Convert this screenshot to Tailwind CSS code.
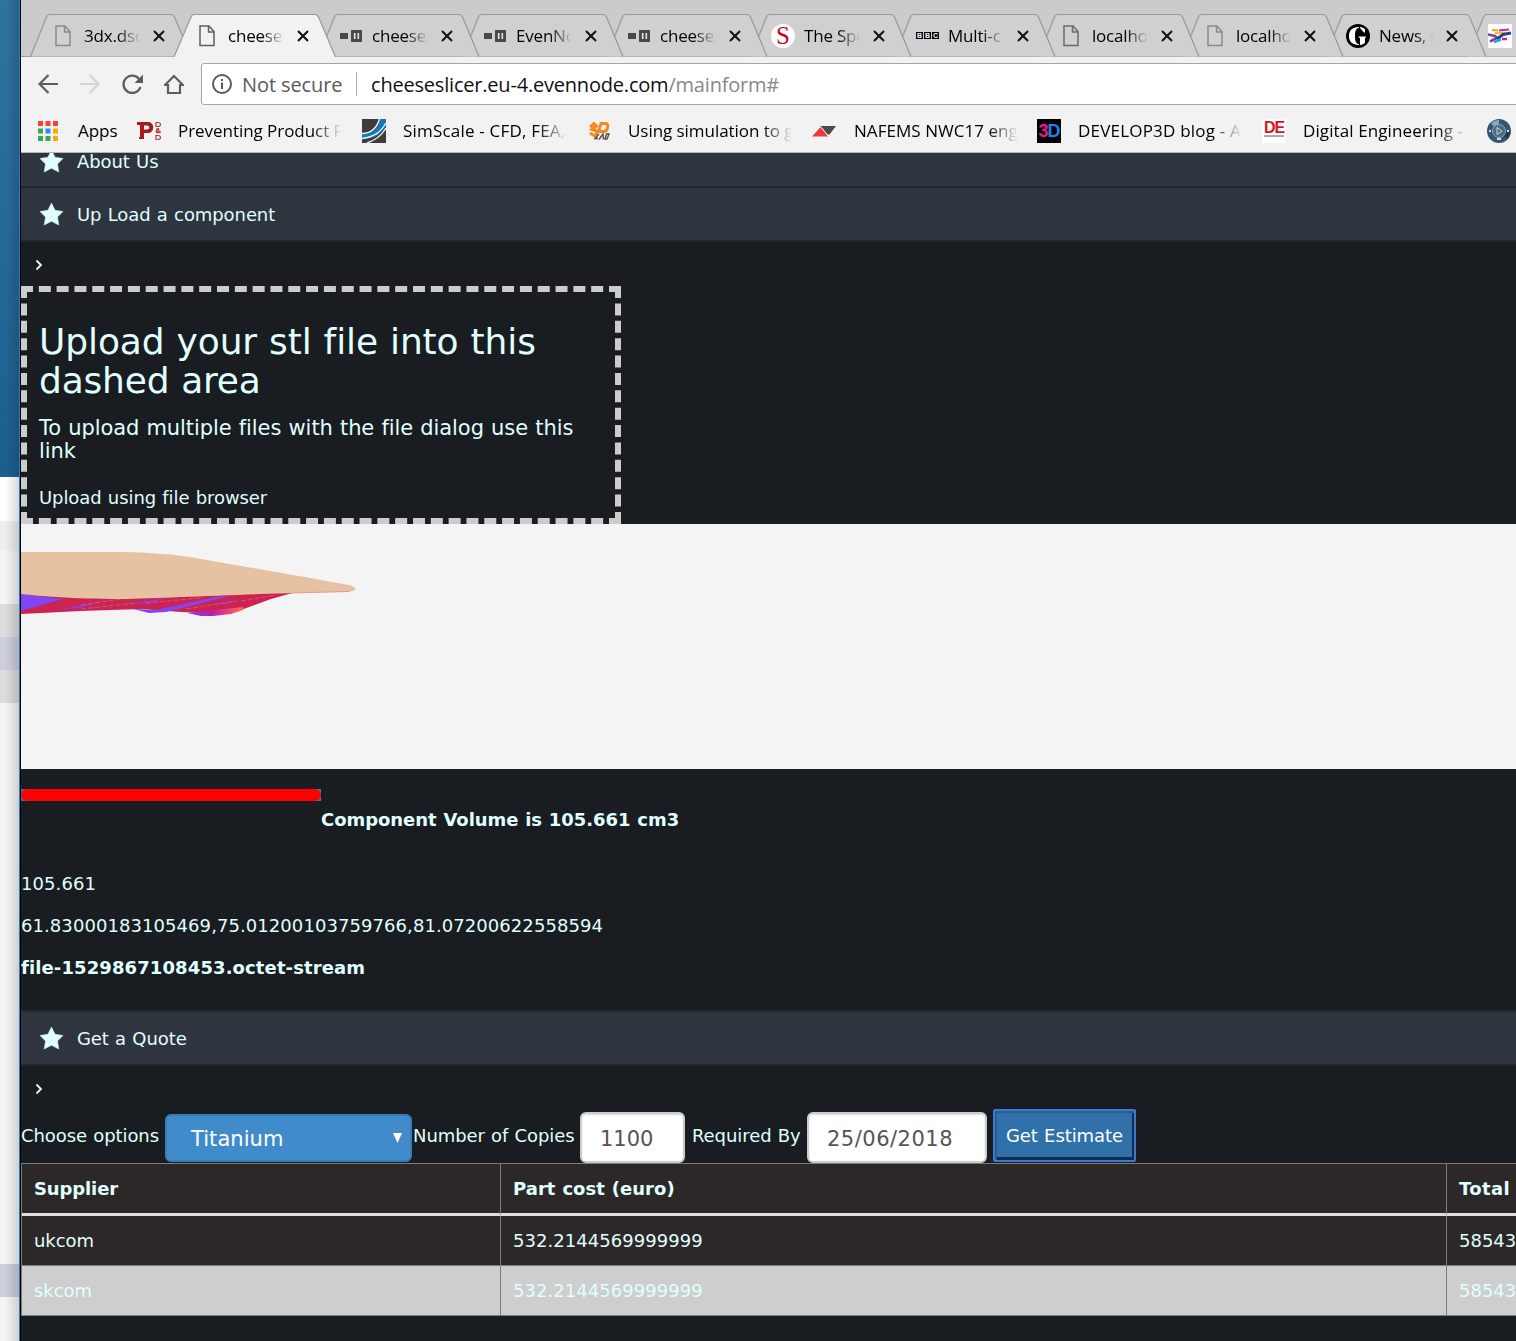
<!DOCTYPE html>
<html lang="en">
<head>
<meta charset="utf-8">
<title>cheeseslicer</title>
<script src="https://cdn.jsdelivr.net/npm/@tailwindcss/browser@4"></script>
</head>
<body class="flex h-[1341px] w-[1516px] overflow-hidden bg-[#191c20]">

<svg class="hidden">
  <symbol id="tab" viewBox="0 0 162 43"><path d="M0.5 42.5 L16.5 3 Q18 .5 20 .5 H141 Q143 .5 144.5 3 L161 42.5" fill="#d0d0d0" stroke="#999" stroke-width="1.2"/></symbol>
  <symbol id="tab-on" viewBox="0 0 162 43"><path d="M0 43 L17 3 Q18 .5 20 .5 H141 Q143 .5 144.5 3 L161.500 43" fill="#f2f2f2" stroke="#999" stroke-width="1.2"/></symbol>
  <symbol id="close" viewBox="0 0 12 12"><path d="M1 1 L11 11 M11 1 L1 11" stroke="#111" stroke-width="2.1" fill="none"/></symbol>
  <symbol id="page" viewBox="0 0 16 22"><path d="M1 1 H10 L15 6.500 V20.500 H1 Z M9.500 1 V7 H15" fill="none" stroke="currentColor" stroke-width="1.500"/></symbol>
  <symbol id="node" viewBox="0 0 22 12"><path d="M0 3 H8 V9 H0 Z M11 0 H22 V12 H11 Z" fill="#484848"/><path d="M14.700 3 V9 M18.300 3 V9" stroke="#e4e4e4" stroke-width="1.600"/></symbol>
  <symbol id="star" viewBox="0 0 24 23"><path d="M11.500 0 L15.100 7.200 L23 8.500 L17.500 14 L18.800 22 L11.500 18.300 L4.200 22 L5.500 14 L0 8.500 L7.900 7.200 Z" fill="#e0ffff" stroke="#e0ffff" stroke-width=".5"/></symbol>
</svg>

<!-- Window behind, visible at the left edge -->
<div class="relative flex w-[21px] shrink-0 flex-col border-r border-black">
  <div class="h-[477px] bg-gradient-to-b from-[#30739f] to-[#1b5f8f]"></div>
  <div class="h-[44px] bg-white"></div>
  <div class="h-[30px] bg-[#eeeeee]"></div>
  <div class="h-[53px] bg-[#f4f4f4]"></div>
  <div class="h-[33px] bg-[#dcdcdc]"></div>
  <div class="h-[33px] bg-[#cdcedc]"></div>
  <div class="h-[33px] bg-[#dcdcdc]"></div>
  <div class="h-[561px] bg-[#f4f4f4]"></div>
  <div class="h-[33px] bg-[#cdcedc]"></div>
  <div class="grow bg-[#f4f4f4]"></div>
  <div class="absolute inset-0 border-r border-[#2b7cc0] bg-gradient-to-r from-transparent from-30% to-black/15"></div>
</div>

<div class="flex w-[1495px] shrink-0 flex-col overflow-hidden">

  <!-- Tabs -->
  <div class="relative flex h-[57px] shrink-0 border-b border-[#999] bg-[#cbcbcb] pl-[9px] pt-[14px] font-['Open_Sans',sans-serif] text-[17px] tracking-[-0.2px] text-black">
    <div class="relative z-[19] -mr-[18px] flex h-[43px] w-[162px] shrink-0 items-center pl-[25px]">
      <svg class="absolute inset-0 h-[43px] w-[162px]"><use href="#tab"/></svg>
      <svg class="relative h-[22px] w-[16px] text-[#8a8a8a]"><use href="#page"/></svg>
      <span class="relative ml-[13px] w-[56px] overflow-hidden whitespace-nowrap [mask-image:linear-gradient(to_right,#000_60%,transparent)]">3dx.dsc</span>
      <svg class="relative ml-[13px] h-[12px] w-[12px]"><use href="#close"/></svg>
    </div>
    <div class="relative z-[30] -mr-[18px] flex h-[43px] w-[162px] shrink-0 items-center pl-[25px]">
      <svg class="absolute inset-0 h-[43px] w-[162px]"><use href="#tab-on"/></svg>
      <svg class="relative h-[22px] w-[16px] text-[#5f5f5f]"><use href="#page"/></svg>
      <span class="relative ml-[13px] w-[56px] overflow-hidden whitespace-nowrap [mask-image:linear-gradient(to_right,#000_60%,transparent)]">cheeses</span>
      <svg class="relative ml-[13px] h-[12px] w-[12px]"><use href="#close"/></svg>
    </div>
    <div class="relative z-[18] -mr-[18px] flex h-[43px] w-[162px] shrink-0 items-center pl-[22px]">
      <svg class="absolute inset-0 h-[43px] w-[162px]"><use href="#tab"/></svg>
      <svg class="relative h-[12px] w-[22px]"><use href="#node"/></svg>
      <span class="relative ml-[10px] w-[56px] overflow-hidden whitespace-nowrap [mask-image:linear-gradient(to_right,#000_60%,transparent)]">cheeses</span>
      <svg class="relative ml-[13px] h-[12px] w-[12px]"><use href="#close"/></svg>
    </div>
    <div class="relative z-[17] -mr-[18px] flex h-[43px] w-[162px] shrink-0 items-center pl-[22px]">
      <svg class="absolute inset-0 h-[43px] w-[162px]"><use href="#tab"/></svg>
      <svg class="relative h-[12px] w-[22px]"><use href="#node"/></svg>
      <span class="relative ml-[10px] w-[56px] overflow-hidden whitespace-nowrap [mask-image:linear-gradient(to_right,#000_60%,transparent)]">EvenNo</span>
      <svg class="relative ml-[13px] h-[12px] w-[12px]"><use href="#close"/></svg>
    </div>
    <div class="relative z-[16] -mr-[18px] flex h-[43px] w-[162px] shrink-0 items-center pl-[22px]">
      <svg class="absolute inset-0 h-[43px] w-[162px]"><use href="#tab"/></svg>
      <svg class="relative h-[12px] w-[22px]"><use href="#node"/></svg>
      <span class="relative ml-[10px] w-[56px] overflow-hidden whitespace-nowrap [mask-image:linear-gradient(to_right,#000_60%,transparent)]">cheeses</span>
      <svg class="relative ml-[13px] h-[12px] w-[12px]"><use href="#close"/></svg>
    </div>
    <div class="relative z-[15] -mr-[18px] flex h-[43px] w-[162px] shrink-0 items-center pl-[21px]">
      <svg class="absolute inset-0 h-[43px] w-[162px]"><use href="#tab"/></svg>
      <span class="relative flex h-6 w-6 items-center justify-center rounded-full bg-white font-['Liberation_Serif',serif] text-[25px] leading-none tracking-normal text-[#d0021b]">S</span>
      <span class="relative ml-[9px] w-[56px] overflow-hidden whitespace-nowrap [mask-image:linear-gradient(to_right,#000_60%,transparent)]">The Spe</span>
      <svg class="relative ml-[13px] h-[12px] w-[12px]"><use href="#close"/></svg>
    </div>
    <div class="relative z-[14] -mr-[18px] flex h-[43px] w-[162px] shrink-0 items-center pl-[22px]">
      <svg class="absolute inset-0 h-[43px] w-[162px]"><use href="#tab"/></svg>
      <span class="relative flex gap-px font-['Liberation_Sans',sans-serif] text-[7px] font-bold leading-[7px] tracking-normal text-white"><b class="w-[7px] bg-black text-center">B</b><b class="w-[7px] bg-black text-center">B</b><b class="w-[7px] bg-black text-center">C</b></span>
      <span class="relative ml-[9px] w-[56px] overflow-hidden whitespace-nowrap [mask-image:linear-gradient(to_right,#000_60%,transparent)]">Multi-c</span>
      <svg class="relative ml-[13px] h-[12px] w-[12px]"><use href="#close"/></svg>
    </div>
    <div class="relative z-[13] -mr-[18px] flex h-[43px] w-[162px] shrink-0 items-center pl-[25px]">
      <svg class="absolute inset-0 h-[43px] w-[162px]"><use href="#tab"/></svg>
      <svg class="relative h-[22px] w-[16px] text-[#6a6a6a]"><use href="#page"/></svg>
      <span class="relative ml-[13px] w-[56px] overflow-hidden whitespace-nowrap [mask-image:linear-gradient(to_right,#000_60%,transparent)]">localho</span>
      <svg class="relative ml-[13px] h-[12px] w-[12px]"><use href="#close"/></svg>
    </div>
    <div class="relative z-[12] -mr-[19px] flex h-[43px] w-[162px] shrink-0 items-center pl-[25px]">
      <svg class="absolute inset-0 h-[43px] w-[162px]"><use href="#tab"/></svg>
      <svg class="relative h-[22px] w-[16px] text-[#8a8a8a]"><use href="#page"/></svg>
      <span class="relative ml-[13px] w-[55px] overflow-hidden whitespace-nowrap [mask-image:linear-gradient(to_right,#000_60%,transparent)]">localho</span>
      <svg class="relative ml-[13px] h-[12px] w-[12px]"><use href="#close"/></svg>
    </div>
    <div class="relative z-[11] -mr-[20px] flex h-[43px] w-[162px] shrink-0 items-center pl-[21px]">
      <svg class="absolute inset-0 h-[43px] w-[162px]"><use href="#tab"/></svg>
      <svg class="relative h-6 w-6" viewBox="0 0 24 24"><circle cx="12" cy="12" r="12" fill="#000"/><path d="M13 3 C6 3 3 6.500 3 12 S6 21 13 21 V20 C10 20 9 17 9 12 S10 4 13 4 Z" fill="#fff"/><path d="M14 3 C16 3.200 18 4 19 5.200 V8.500 H18 L14 4 Z M12.500 12.500 H20 V13.300 L19 14 V18.700 C18 19.800 16 20.600 14 20.900 V14 L12.500 13.300 Z" fill="#fff"/></svg>
      <span class="relative ml-[9px] w-[55px] overflow-hidden whitespace-nowrap [mask-image:linear-gradient(to_right,#000_65%,transparent)]">News, s</span>
      <svg class="relative ml-[12px] h-[12px] w-[12px]"><use href="#close"/></svg>
    </div>
    <div class="relative z-[10] flex h-[43px] w-[162px] shrink-0 items-center pl-[21px]">
      <svg class="absolute inset-0 h-[43px] w-[162px]"><use href="#tab"/></svg>
      <svg class="relative h-6 w-6" viewBox="0 0 24 24"><path fill="#fff" d="M0 0H24V24H0Z"/><path d="M4 6 L10 6.500" stroke="#f59c1a" stroke-width="2"/><path d="M11 6.500 L21 5.500" stroke="#e0218a" stroke-width="2"/><path d="M7 9 L17 9" stroke="#f0c020" stroke-width="2"/><path d="M0 10.500 L7 12 L9 14 L2 17.500" stroke="#7a3f9a" stroke-width="2.600" fill="none"/><path d="M9 15 L15 10.500 L23 9" stroke="#233f8f" stroke-width="3" fill="none"/><path d="M6 18 L13 15.500" stroke="#20a8d8" stroke-width="2.500"/><path d="M14 15 H19" stroke="#e6196e" stroke-width="2.500"/></svg>
    </div>
  </div>

  <!-- Toolbar -->
  <div class="flex h-[54px] shrink-0 items-center bg-[#f2f2f2] pl-[17px] font-['Open_Sans',sans-serif] text-[20px]">
    <svg class="h-5 w-5 shrink-0" viewBox="0 0 20 20" fill="none" stroke="#5a5d62" stroke-width="2.200"><path d="M20 10H1.500M10.500 1L1.500 10L10.500 19"/></svg>
    <svg class="ml-[22px] h-5 w-5 shrink-0" viewBox="0 0 20 20" fill="none" stroke="#d3d4d5" stroke-width="2.200"><path d="M0 10H18.500M9.500 1L18.500 10L9.500 19"/></svg>
    <svg class="ml-[22px] h-5 w-[21px] shrink-0" viewBox="0 0 21 20"><path d="M17.500 5.500A8.700 8.700 0 1 0 18.500 13" fill="none" stroke="#5a5d62" stroke-width="2.300"/><path d="M21 .5V9H12.500Z" fill="#5a5d62"/></svg>
    <svg class="ml-[21px] h-5 w-5 shrink-0" viewBox="0 0 20 20"><path d="M1 11L10 2L19 11H16V19H4V11Z" fill="none" stroke="#5a5d62" stroke-width="2.200"/></svg>
    <div class="ml-[17px] flex h-[42px] w-[1330px] shrink-0 items-center rounded-[3px] border border-[#a6a6a6] bg-white pl-[10px] whitespace-nowrap">
      <svg class="h-5 w-5 shrink-0" viewBox="0 0 20 20"><circle cx="10" cy="10" r="9" fill="none" stroke="#5a5a5a" stroke-width="2"/><path d="M9 8.500H11V15H9ZM9 5H11V7H9Z" fill="#5a5a5a"/></svg>
      <span class="ml-[10px] w-[114px] pt-px tracking-[-0.1px] text-[#5a5a5a]">Not secure</span>
      <span class="h-[24px] w-px bg-[#b0b0b0]"></span>
      <span class="ml-[14px] pt-px tracking-[-0.2px] text-[#111]">cheeseslicer.eu-4.evennode.com<span class="text-[#888]">/mainform#</span></span>
    </div>
  </div>

  <!-- Bookmarks -->
  <div class="flex h-[42px] shrink-0 items-center overflow-hidden border-b border-[#b5b5b5] bg-[#f2f2f2] pb-[2px] pl-[17px] font-['Open_Sans',sans-serif] text-[17px] tracking-[-0.05px] whitespace-nowrap text-black">
    <svg class="h-5 w-5 shrink-0" viewBox="0 0 20 20"><path d="M0 0H5V5H0ZM7.500 0H12.500V5H7.500ZM15 0H20V5H15Z" fill="#f44336"/><path d="M0 7.500H5V12.500H0ZM0 15H5V20H0ZM7.500 15H12.500V20H7.500Z" fill="#34a853"/><path d="M7.500 7.500H12.500V12.500H7.500Z" fill="#2a8cff"/><path d="M15 7.500H20V12.500H15ZM15 15H20V20H15Z" fill="#fbab00"/></svg>
    <span class="ml-5 w-[59px] shrink-0">Apps</span>
    <div class="flex w-[225px] shrink-0 items-center">
      <svg class="h-6 w-6 shrink-0" viewBox="0 0 24 24"><path d="M0 3H11C18 3 18 14 11 14H7V20H2V18H3V6H0ZM7 6.500V10.500H10C13 10.500 13 6.500 10 6.500Z" fill="#a51c1c" fill-rule="evenodd"/><g fill="none" stroke="#b03a3a" stroke-width="1.200"><path d="M19 3.500H21Q23.500 3.500 23.500 5.500T21 7.500H19ZM19 16.500H21Q23.500 16.500 23.500 18.500T21 20.500H19ZM23.500 14L19.500 10.500Q21 8.500 22 10.500L19 12.500Q20 15 23.500 12"/></g></svg>
      <span class="ml-[17px] w-[164px] overflow-hidden [mask-image:linear-gradient(to_right,#000_82%,transparent)]">Preventing Product F</span>
    </div>
    <div class="flex w-[225px] shrink-0 items-center">
      <svg class="h-6 w-6 shrink-0" viewBox="0 0 24 24"><path fill="#403c3a" d="M0 0H24V24H0Z"/><path d="M0 15C11 15 16 9 18 0H24V7C19 16 12 20 0 20Z" fill="#1479b8"/><path d="M0 14.500C10 14.500 15 8 17.500 0M0 19.500C12 18 18 14 24 4M5 24C14 21 20 16 24 9" stroke="#f2f2f2" stroke-width="1.400" fill="none"/></svg>
      <span class="ml-[17px] w-[164px] overflow-hidden tracking-[0.2px] [mask-image:linear-gradient(to_right,#000_82%,transparent)]">SimScale - CFD, FEA,</span>
    </div>
    <div class="flex w-[225px] shrink-0 items-center">
      <svg class="h-6 w-6 shrink-0" viewBox="0 0 24 24"><g fill="none" stroke="#f58a1f" stroke-width="3"><path d="M3 8L7 4.500L9.500 7L5 10.500L10 12L8.500 17.500L3 14"/><path d="M14 4.500H19Q21.500 5 20.500 9Q19.500 12.500 17 12.500H11.500Z"/></g><path d="M12 15L8 19.500H11M12 20.500L16 15L16.500 20.500M18 20L19.500 15H22L20 20Z" fill="none" stroke="#55504c" stroke-width="1.400"/></svg>
      <span class="ml-[17px] w-[164px] overflow-hidden [mask-image:linear-gradient(to_right,#000_82%,transparent)]">Using simulation to g</span>
    </div>
    <div class="flex w-[225px] shrink-0 items-center">
      <svg class="h-6 w-6 shrink-0" viewBox="0 0 24 24"><path d="M8 7H24L17.500 15.500H15Z" fill="#4a4a4a"/><path d="M0 17.500L8.500 8L16 17.500Z" fill="#ea3b3b"/><path d="M8.500 7.500L16.500 17" stroke="#f2f2f2"/></svg>
      <span class="ml-[18px] w-[164px] overflow-hidden tracking-[0.05px] [mask-image:linear-gradient(to_right,#000_82%,transparent)]">NAFEMS NWC17 eng</span>
    </div>
    <div class="flex w-[225px] shrink-0 items-center">
      <span class="flex h-6 w-6 shrink-0 items-center justify-center bg-black font-['Liberation_Sans',sans-serif] text-[18px] font-bold leading-none tracking-[-1px]"><span class="text-[#f5148c]">3</span><span class="text-[#1488f5]">D</span></span>
      <span class="ml-[17px] w-[164px] overflow-hidden tracking-[0.2px] [mask-image:linear-gradient(to_right,#000_82%,transparent)]">DEVELOP3D blog - A</span>
    </div>
    <div class="flex w-[225px] shrink-0 items-center">
      <span class="flex h-6 w-6 shrink-0 flex-col items-center bg-white pt-[2px] font-['Liberation_Sans',sans-serif] text-[16px] font-bold leading-[13px] tracking-[-1px] text-[#d8131f]">DE<span class="mt-px h-[2px] w-5 bg-[#aaa]"></span></span>
      <span class="ml-[17px] w-[164px] overflow-hidden tracking-[0.1px] [mask-image:linear-gradient(to_right,#000_82%,transparent)]">Digital Engineering - </span>
    </div>
    <svg class="h-6 w-6 shrink-0" viewBox="0 0 24 24"><circle cx="12" cy="12" r="12" fill="#38556f"/><path d="M4 4A11 11 0 0 1 12 1V6A6 6 0 0 0 7 8Z" fill="#86a8c6"/><path d="M20 20A11 11 0 0 0 23 12H18A6 6 0 0 1 16 16Z" fill="#23394d"/><circle cx="12" cy="12" r="6.500" fill="#4d6c86" stroke="#8fa5b7"/><path d="M10 8.500L15 12L10 15.500Z" fill="none" stroke="#c5d3de"/><path d="M10 20H14M2 12H4M20 12H22" stroke="#cfe0ee" stroke-width="2"/></svg>
  </div>

  <!-- Page -->
  <main class="flex grow flex-col overflow-hidden bg-[#191c20] font-['DejaVu_Sans',sans-serif] text-[18px] leading-[24px] tracking-[-0.08px] text-[#e0ffff] [font-variant-ligatures:none] [word-spacing:0.035em]">
    <div class="-mt-[18px] flex h-[53px] shrink-0 items-center border-b-2 border-[#23282e] bg-[#2f353e] pl-[19px] pt-px">
      <svg class="h-[23px] w-6"><use href="#star"/></svg><span class="ml-[13px] pt-[2px]">About Us</span>
    </div>
    <div class="flex h-[54px] shrink-0 items-center border-b-2 border-[#23282e] bg-[#2f353e] pl-[19px] pt-px">
      <svg class="h-[23px] w-6"><use href="#star"/></svg><span class="ml-[13px]">Up Load a component</span>
    </div>
    <div class="flex h-[44px] shrink-0 items-center pl-[14px] pt-px"><svg class="h-3 w-[7px]" viewBox="0 0 7 12"><path d="M1.500 1.500L6 6L1.500 10.500" fill="none" stroke="#e0ffff" stroke-width="1.900"/></svg></div>

    <div class="h-[238px] w-[600px] shrink-0 border-[6px] border-dashed border-[#cccccc] px-3 pt-[30px]">
      <h1 class="text-[36px] leading-[39px] tracking-[-0.1px]">Upload your stl file into this<br><span class="tracking-[-0.2px]">dashed area</span></h1>
      <h3 class="mt-[17px] text-[21px] leading-[23px]">To upload multiple files with the file dialog use this<br>link</h3>
      <div class="mt-[23px]">Upload using file browser</div>
    </div>

    <div class="h-[245px] shrink-0 bg-[#f4f4f4]">
      <svg class="h-[120px] w-[380px]" viewBox="0 0 380 120">
        <defs><linearGradient id="tip"><stop offset="0" stop-color="#7a40f5"/><stop offset=".45" stop-color="#c01ab0"/><stop offset="1" stop-color="#ff7048"/></linearGradient></defs>
        <path d="M0 70H120L275 68L250 75L220 86L205 90L160 88L120 85L60 87L0 90Z" fill="#cc2450"/>
        <path d="M0 70L42 75L0 87Z" fill="#8045f5"/>
        <path d="M195 73L209 72L145 88L128 89L112 85L135 86Z" fill="#8045f5"/>
        <path d="M36 86L85 76L60 84ZM110 79L145 74L128 80ZM188 81L220 75L207 80Z" fill="#a234c0"/>
        <path d="M60 81L100 75M125 79L180 74M60 85L115 79M165 85L215 77M220 77L255 71" stroke="#d0607a" stroke-width=".8" stroke-dasharray="5 2"/>
        <path d="M166 89L195 86L222 83V86L210 90L192 92H180Z" fill="url(#tip)"/>
        <path d="M0 28H90C120 28 150 29.500 180 35C220 42 280 52 328 61C337 64 337 67 326 68C270 68 150 74 100 75C50 75 20 72 0 70Z" fill="#e6c2a2"/>
        <path d="M270 69L328 67.500" stroke="#e79a96" stroke-width="1"/>
      </svg>
    </div>

    <div class="flex h-[70px] shrink-0 items-start pt-5">
      <div class="h-3 w-[300px] bg-[#3c78b0]"><div class="h-3 w-full rounded-[6px] bg-[#ff0000]"></div></div>
      <div class="mt-[19px] font-bold tracking-[-0.05px]">Component Volume is 105.661 cm3</div>
    </div>
    <div class="mt-[33px] flex shrink-0 flex-col gap-[18px]">
      <div class="tracking-[0.08px]">105.661</div>
      <div class="tracking-[0.07px]">61.83000183105469,75.01200103759766,81.07200622558594</div>
      <div class="font-bold tracking-[0.11px]">file-1529867108453.octet-stream</div>
    </div>

    <div class="mt-[30px] flex h-[56px] shrink-0 items-center border-y-2 border-[#23282e] bg-[#2f353e] pl-[19px] pt-px">
      <svg class="h-[23px] w-6"><use href="#star"/></svg><span class="ml-[13px]">Get a Quote</span>
    </div>
    <div class="flex h-[43px] shrink-0 items-center pl-[14px] pt-[3px]"><svg class="h-3 w-[7px]" viewBox="0 0 7 12"><path d="M1.500 1.500L6 6L1.500 10.500" fill="none" stroke="#e0ffff" stroke-width="1.900"/></svg></div>

    <div class="flex h-[54px] shrink-0 items-start whitespace-nowrap">
      <span class="mt-[15px] w-[144px]">Choose options</span>
      <div class="mt-[5px] flex h-[48px] w-[247px] items-center justify-between rounded-[6px] border-2 border-[#357ebd] bg-[#428bca] pl-6 pr-2 text-[21px] text-white"><span class="pt-[2px] tracking-[0.05px]">Titanium</span>
        <svg class="h-[10px] w-[9px]" viewBox="0 0 9 10"><path d="M0 0H9L4.500 10Z" fill="#fff"/></svg></div>
      <span class="ml-px mt-[15px] w-[167px]">Number of Copies</span>
      <div class="mt-[3px] h-[51px] w-[105px] rounded-[6px] border-2 border-[#cccccc] bg-white pl-[18px] pt-[13px] text-[21px] tracking-normal text-[#555] shadow-[inset_0_1px_2px_rgba(0,0,0,0.15)]">1100</div>
      <span class="ml-[7px] mt-[15px] w-[115px]">Required By</span>
      <div class="mt-[3px] h-[51px] w-[180px] rounded-[6px] border-2 border-[#cccccc] bg-white pl-[18px] pt-[13px] text-[21px] tracking-[0.5px] text-[#555] shadow-[inset_0_1px_2px_rgba(0,0,0,0.15)]">25/06/2018</div>
      <div class="ml-[6px] flex h-[53px] w-[143px] items-center justify-center rounded-[2px] border-2 border-[#3d78d6] bg-[#3071a9] text-white shadow-[inset_2px_2px_0_#285e8e,inset_-2px_-3px_0_#142c46]">Get Estimate</div>
    </div>

    <div class="grid w-[1900px] shrink-0 grid-cols-[479px_946px_475px] border-l border-t border-[#7c7c7c]">
      <div class="flex h-[52px] items-center border-b-[3px] border-r border-b-[#dddddd] border-r-[#7c7c7c] bg-[#2d2828] pl-3 pt-px font-bold tracking-[-0.12px]">Supplier</div>
      <div class="flex h-[52px] items-center border-b-[3px] border-r border-b-[#dddddd] border-r-[#7c7c7c] bg-[#2d2828] pl-3 pt-px font-bold tracking-[0.03px]">Part cost (euro)</div>
      <div class="flex h-[52px] items-center border-b-[3px] border-b-[#dddddd] bg-[#2d2828] pl-3 pt-px font-bold tracking-[0.4px]">Total</div>
      <div class="flex h-[50px] items-center border-b border-r border-[#7c7c7c] bg-[#2d2828] pl-3 pt-px">ukcom</div>
      <div class="flex h-[50px] items-center border-b border-r border-[#7c7c7c] bg-[#2d2828] pl-3 pt-px tracking-[0.05px]">532.2144569999999</div>
      <div class="flex h-[50px] items-center border-b border-[#7c7c7c] bg-[#2d2828] pl-3 pt-px tracking-normal">58543</div>
      <div class="flex h-[50px] items-center border-b border-r border-[#7c7c7c] bg-[#cecece] pl-3 pt-px">skcom</div>
      <div class="flex h-[50px] items-center border-b border-r border-[#7c7c7c] bg-[#cecece] pl-3 pt-px tracking-[0.05px]">532.2144569999999</div>
      <div class="flex h-[50px] items-center border-b border-[#7c7c7c] bg-[#cecece] pl-3 pt-px tracking-normal">58543</div>
    </div>
  </main>
</div>
</body>
</html>
